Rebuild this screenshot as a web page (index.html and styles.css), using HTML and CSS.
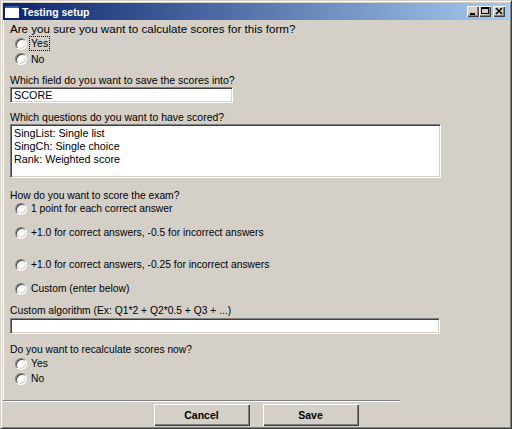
FILE: index.html
```html
<!DOCTYPE html>
<html lang="en">
  <head>
    <meta charset="utf-8">
    <title>Testing setup</title>
    <link rel="stylesheet" href="styles.css">
  </head>
  <body>
    <div class="window">
      <div class="titlebar">
        <svg class="app_icon" width="14" height="12" viewBox="0 0 14 12">
          <rect x="0" y="0" width="14" height="12" fill="#fff"/>
          <rect x="0" y="0" width="14" height="2" fill="#3a5fb0"/>
        </svg>
        <span class="title">Testing setup</span>
        <div class="caption_buttons">
          <span class="cap_btn">
            <svg width="12" height="11" viewBox="0 0 12 11"><rect x="3" y="7" width="5" height="2" fill="#000"/></svg>
          </span>
          <span class="cap_btn">
            <svg width="12" height="11" viewBox="0 0 12 11"><rect x="2.5" y="1.5" width="7" height="6" fill="none" stroke="#000"/><rect x="2" y="1" width="8" height="2" fill="#000"/></svg>
          </span>
          <span class="cap_btn cap_close">
            <svg width="12" height="11" viewBox="0 0 12 11"><path d="M3 2 L9 8 M9 2 L3 8" stroke="#000" stroke-width="1.6"/></svg>
          </span>
        </div>
      </div>

      <div class="panel">
        <div class="label big first">Are you sure you want to calculate scores for this form?</div>
        <div class="option big"><span class="radio"></span><span class="focused">Yes</span></div>
        <div class="option big"><span class="radio"></span><span>No</span></div>

        <div class="label big gap7">Which field do you want to save the scores into?</div>
        <div class="field field_short">SCORE</div>

        <div class="label big gap7">Which questions do you want to have scored?</div>
        <div class="listbox">
          <div>SingList: Single list</div>
          <div>SingCh: Single choice</div>
          <div>Rank: Weighted score</div>
        </div>

        <div class="label small gap11">How do you want to score the exam?</div>
        <div class="option small"><span class="radio"></span><span>1 point for each correct answer</span></div>
        <div class="option small gap11"><span class="radio"></span><span>+1.0 for correct answers, -0.5 for incorrect answers</span></div>
        <div class="option small gap19"><span class="radio"></span><span>+1.0 for correct answers, -0.25 for incorrect answers</span></div>
        <div class="option small gap11"><span class="radio"></span><span>Custom (enter below)</span></div>

        <div class="label small gap9">Custom algorithm (Ex: Q1*2 + Q2*0.5 + Q3 + ...)</div>
        <div class="field field_long"></div>

        <div class="label small gap9">Do you want to recalculate scores now?</div>
        <div class="option small tall"><span class="radio"></span><span>Yes</span></div>
        <div class="option small tall"><span class="radio"></span><span>No</span></div>
      </div>

      <div class="footer">
        <div class="separator"></div>
        <div class="buttons">
          <div class="push_btn">Cancel</div>
          <div class="push_btn">Save</div>
        </div>
      </div>
    </div>
  </body>
</html>
```

FILE: styles.css
```css
html, body {
  margin:0;
  padding:0;
}
body {
  background-color:#D4D0C8;
  font-family: "Liberation Sans", Arial, sans-serif;
  color:#000;
}

.window {
  box-sizing:border-box;
  width:512px;
  height:429px;
  display:flex;
  flex-direction:column;
  padding:2px 2px 2px 2px;
  border:1px solid;
  border-color:#D4D0C8 #404040 #404040 #D4D0C8;
  box-shadow: inset 1px 1px 0 #fff, inset -1px -1px 0 #808080;
  background-color:#D4D0C8;
}

/* title bar */
.titlebar {
  height:17px;
  flex-shrink:0;
  display:flex;
  align-items:center;
  background:linear-gradient(to right, #0A246A, #A6CAF0);
  padding:0 4px 0 2px;
}
.app_icon {
  display:block;
  margin-right:3px;
}
.title {
  color:#fff;
  font-weight:bold;
  font-size:10.5px;
  flex-grow:1;
}
.caption_buttons {
  display:flex;
}
.cap_btn {
  box-sizing:border-box;
  width:12px;
  height:11px;
  background-color:#D4D0C8;
  box-shadow: inset 1px 1px 0 #fff, inset -1px -1px 0 #404040, inset -2px -2px 0 #808080;
}
.cap_btn svg {
  display:block;
}
.cap_close {
  margin-left:2px;
}

/* form area */
.panel {
  flex-grow:1;
  border-left:1px solid #fff;
  padding:2px 0 0 6px;
  display:flex;
  flex-direction:column;
  align-items:flex-start;
}
.big {
  font-size:10.5px;
  line-height:14px;
}
.big.first {
  font-size:11.6px;
}
.small {
  font-size:10.3px;
  line-height:13px;
}
.option {
  display:flex;
  align-items:center;
  padding-left:5px;
}
.option.big, .option.tall {
  height:15px;
}
.radio {
  box-sizing:border-box;
  width:12px;
  height:12px;
  margin-right:4px;
  border-radius:50%;
  border:1px solid;
  border-color:#808080 #fff #fff #808080;
  background-color:#fff;
  box-shadow: inset 1px 1px 0 #404040, inset -1px -1px 0 #D4D0C8;
  flex-shrink:0;
}
.focused {
  border:1px dotted #000;
  line-height:13px;
  padding:0 1px;
  margin-left:-2px;
}
.gap7 { margin-top:7px; }
.gap9 { margin-top:9px; }
.gap11 { margin-top:11px; }
.gap19 { margin-top:19px; }

.field, .listbox {
  box-sizing:border-box;
  background-color:#fff;
  border:1px solid;
  border-color:#808080 #fff #fff #808080;
  box-shadow: inset 1px 1px 0 #404040, inset -1px -1px 0 #D4D0C8;
  font-size:10.8px;
}
.field {
  height:16px;
  line-height:14px;
  padding-left:3px;
}
.field_short {
  width:223px;
}
.field_long {
  width:430px;
  margin-top:1px;
}
.listbox {
  width:431px;
  height:54px;
  line-height:13px;
  padding:2px 3px;
}

/* bottom buttons */
.footer {
  flex-shrink:0;
  height:26px;
}
.separator {
  width:397px;
  border-top:1px solid #808080;
  border-bottom:1px solid #fff;
}
.buttons {
  display:flex;
  justify-content:center;
  gap:13px;
  margin-top:2px;
}
.push_btn {
  box-sizing:border-box;
  width:96px;
  height:22px;
  line-height:22px;
  text-align:center;
  font-size:10.5px;
  font-weight:bold;
  background-color:#D4D0C8;
  box-shadow: inset 1px 1px 0 #fff, inset -1px -1px 0 #404040, inset -2px -2px 0 #808080;
  user-select:none;
}
```
